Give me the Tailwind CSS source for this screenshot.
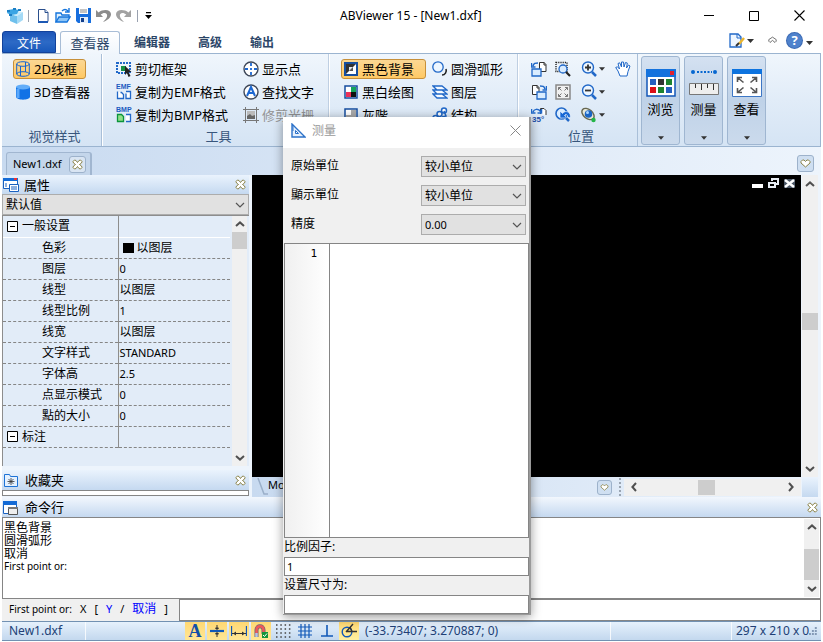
<!DOCTYPE html>
<html lang="zh-CN">

<head>
  <meta charset="UTF-8" />
  <meta name="viewport" content="width=device-width, initial-scale=1.0" />
  <title>ABViewer 15 - [New1.dxf]</title>
  <script src="https://cdn.jsdelivr.net/npm/@tailwindcss/browser@4"></script>
</head>

<body class="h-screen flex flex-col overflow-hidden bg-white px-0.5 text-[12px] leading-4 text-black font-['Noto_Sans','Noto_Sans_CJK_SC',sans-serif]">

  <!-- Shared glyphs -->
  <svg class="hidden">
    <symbol id="caret" viewBox="0 0 7 4"><path d="M0 0h7L3.500 4z" fill="#333" /></symbol>
    <symbol id="chev" viewBox="0 0 10 6"><path d="M1 1l4 4 4-4" fill="none" stroke="#555" stroke-width="1.2" /></symbol>
    <symbol id="arrow" viewBox="0 0 10 6"><path d="M1 1l4 3.600L9 1" fill="none" stroke="#505050" stroke-width="2" /></symbol>
    <symbol id="close" viewBox="0 0 11 11"><path d="M2.500 1L4 1.500l1.500 2 1.500-2L8.500 1l1.500 1.500-.5 1.500-2 1.500 2 1.500.5 1.500L8.500 10 7 9.500l-1.500-2-1.500 2-1.500.5L1 8.500 1.500 7l2-1.500-2-1.500L1 2.500z" fill="#fff" stroke="#8a8247" /></symbol>
    <symbol id="heart" viewBox="0 0 11 9"><path d="M1 2.500L2.500 1H4l1.500 1.500L7 1h1.500L10 2.500V4L5.500 8 1 4z" fill="#fff" stroke="#8a8247" /></symbol>
    <symbol id="page" viewBox="0 0 12 15"><path d="M1.500 1.500H8l3 3v9H1.500z" fill="#fff" stroke="#2a4f8c" /><path d="M1 14h10" stroke="#1c58b4" stroke-width="2" /><path d="M8 1.500v3h3" fill="#dbe8f8" stroke="#2a4f8c" /></symbol>
  </svg>

  <!-- Title bar -->
  <header class="h-[31px] shrink-0 flex items-center">
    <div class="w-[338px] flex items-center pl-1">
      <svg class="w-[18px] h-[18px]" viewBox="0 0 18 18">
        <path d="M4 7l7 2v8l-7-3z" fill="#6fc0ec" />
        <path d="M4 7l5-3 8 1-6 4z" fill="#c8ecfb" />
        <path d="M11 9l6-4v8l-6 4z" fill="#a4daf6" />
        <path d="M2 3l6-1 5 1-2 4-6 1-4-2z" fill="#3aa5e4" />
        <path d="M1 3h3v2H1zM7 1h3v2H7zM12 2h3v2h-3zM3 7h3v2H3z" fill="#1b7fc6" />
      </svg>
      <span class="w-px h-3 bg-gray-400 ml-1 mr-2"></span>
      <button aria-label="New"><svg class="w-[12px] h-[15px]"><use href="#page" /></svg></button>
      <button aria-label="Open" class="ml-1.5">
        <svg class="w-4 h-4" viewBox="0 0 16 16">
          <path d="M1 14V5h5l1 2h7v2" fill="#dff1ff" stroke="#1474dc" stroke-width="1.400" />
          <path d="M1 14l3-5h11l-3 5z" fill="#8cc4f6" stroke="#1474dc" stroke-width="1.400" />
          <path d="M7 3c2-2 4-2 6 0M14 0v4h-4" fill="none" stroke="#1474dc" stroke-width="1.400" />
        </svg>
      </button>
      <button aria-label="Save" class="ml-[5px]">
        <svg class="w-[15px] h-[15px]" viewBox="0 0 15 15">
          <path d="M0 0h15v15H2l-2-2z" fill="#176ede" />
          <path d="M3 0h9v6H3z" fill="#fff" /><path d="M4 2h7M4 4h7" stroke="#888" />
          <path d="M4 9h8v6H4z" fill="#e5eefa" /><path d="M5 10h3v4H5z" fill="#123f8c" />
        </svg>
      </button>
      <button aria-label="Undo" class="ml-[5px]">
        <svg class="w-[15px] h-[14px]" viewBox="0 0 15 14"><path d="M0 1v7h7L4.700 5.600C8 2.500 12 4 11 7.500c-.5 2-2 3.500-4 5.500 4-1.500 8-4 8-8C14.500 0 7 0 2.600 3.400z" fill="#8c8c8c" /></svg>
      </button>
      <button aria-label="Redo" class="ml-[5px]">
        <svg class="w-[15px] h-[14px]" viewBox="0 0 15 14"><path d="M15 1v7H8l2.300-2.400C7 2.500 3 4 4 7.500c.5 2 2 3.500 4 5.500C4 11.500 0 9 0 5 .5 0 8 0 12.400 3.400z" fill="#a2a2a2" /></svg>
      </button>
      <span class="w-px h-3 bg-gray-400 ml-1.5 mr-[7px]"></span>
      <button aria-label="Customize"><svg class="w-[7px] h-[7px]" viewBox="0 0 7 7"><path d="M1 0h5v1.300H1zM0 3h7L3.500 7z" /></svg></button>
    </div>
    <h1 class="flex-1">ABViewer 15 - [New1.dxf]</h1>
    <div class="flex items-center gap-[35px] pr-4">
      <button aria-label="Minimize"><svg class="w-2.5 h-2.5" viewBox="0 0 10 10"><path d="M0 4.500h10" stroke="#000" /></svg></button>
      <button aria-label="Maximize"><svg class="w-2.5 h-2.5" viewBox="0 0 10 10"><path d="M.5.5h9v9h-9z" fill="none" stroke="#000" /></svg></button>
      <button aria-label="Close"><svg class="w-[11px] h-[11px]" viewBox="0 0 11 11"><path d="M.5.5l10 10M10.500.5l-10 10" stroke="#000" stroke-width="1.100" /></svg></button>
    </div>
  </header>

  <!-- Ribbon tabs -->
  <nav class="h-[23px] shrink-0 flex items-end border-b border-[#9bb4d0] text-[#2b4567]">
    <button class="w-[54px] h-[22px] rounded-t-[3px] border border-[#12429b] bg-linear-to-b from-[#1d55b8] via-[#2d6ac6] to-[#1858bb] text-white pt-[3px]">文件</button>
    <button class="relative top-px ml-1 w-[60px] h-[23px] rounded-t-[3px] border border-b-0 border-[#a8bdd6] bg-linear-to-b from-white to-[#f0f6fc] text-[13px]">查看器</button>
    <button class="ml-3.5 h-[22px] pt-0.5 font-bold">编辑器</button>
    <button class="ml-[28px] h-[22px] pt-0.5 font-bold">高级</button>
    <button class="ml-[28px] h-[22px] pt-0.5 font-bold">输出</button>
    <div class="ml-auto h-full flex items-start pt-0.5 pr-2">
      <button aria-label="Style" class="flex items-center gap-0.5">
        <svg class="w-4 h-4" viewBox="0 0 16 16">
          <path d="M1 1h8l3 3v10H1z" fill="#eef6ff" stroke="#2168c8" stroke-width="1.300" /><path d="M8 1v4h4" fill="none" stroke="#2168c8" />
          <path d="M15 5l-5 6" stroke="#ecb62e" stroke-width="2.500" /><path d="M10 10l-3 3" stroke="#333" stroke-width="2" />
        </svg>
        <svg class="w-[7px] h-1"><use href="#caret" /></svg>
      </button>
      <button aria-label="Collapse" class="ml-3.5 mt-[3px]"><svg class="w-[9px] h-[8px] rotate-180" viewBox="0 0 11 9"><path d="M1 3l1.500-1.500L5.500 4l3-2.500L10 3v2L5.500 8 1 5z" fill="#fff" stroke="#555" /></svg></button>
      <button aria-label="Help" class="ml-2.5 flex items-center gap-1">
        <span class="w-[15px] h-[15px] rounded-full bg-[#4f82cc] ring-1 ring-[#3b6ab4] text-white font-bold text-[13px] leading-[15px]">?</span>
        <svg class="w-[7px] h-1 mt-1"><use href="#caret" /></svg>
      </button>
    </div>
  </nav>

  <!-- Ribbon -->
  <section class="h-[93px] shrink-0 flex border-b border-[#9bb4d0] bg-linear-to-b from-[#f0f6fc] via-[#e1ecf8] to-[#d5e4f4] text-[13px]">
    <div class="w-[100px] flex flex-col border-r border-[#a9bfd8] pt-[5px]">
      <div class="h-[69px] px-[11px]">
        <button class="w-[73px] h-5 flex items-center gap-1 px-0.5 rounded-[3px] border border-[#c7903a] bg-linear-to-b from-[#fbd793] to-[#ffc964] whitespace-nowrap">
          <svg class="w-[14px] h-4 shrink-0" viewBox="0 0 14 16"><path d="M.7 3v10M13.300 3v10M4.500 5v10M9.500 1v10" fill="none" stroke="#1766d2" /><ellipse cx="7" cy="3" rx="6.300" ry="2.300" fill="none" stroke="#1766d2" /><ellipse cx="7" cy="13" rx="6.300" ry="2.300" fill="none" stroke="#1766d2" /></svg>2D线框</button>
        <button class="h-[25px] flex items-center gap-1 px-[3px] whitespace-nowrap">
          <svg class="w-[14px] h-4 shrink-0" viewBox="0 0 14 16"><path d="M0 3v10c1 3.500 13 3.500 14 0V3z" fill="#1272e6" /><path d="M2 5v9" stroke="#5aa8fb" stroke-width="3" /><ellipse cx="7" cy="3" rx="7" ry="2.500" fill="#62adf9" /></svg>3D查看器</button>
      </div>
      <h2 class="text-center text-[#38567c] pl-1.5">视觉样式</h2>
    </div>

    <div class="w-[227px] flex flex-col border-r border-[#bfcfe2] border-l border-l-white pt-[5px]">
      <div class="h-[69px] grid grid-cols-[127px_1fr] grid-rows-[20px_25px_22px] pl-[13px] whitespace-nowrap">
        <button class="flex items-center gap-[3px]">
          <svg class="w-4 h-4" viewBox="0 0 16 16"><path d="M1 2h13v10H1z" fill="none" stroke="#2168c8" stroke-width="2" stroke-dasharray="2 1" /><path d="M5 5h5v5H5z" fill="#159045" /><path d="M9 5v9l2-2 1.500 4 2-1-2-4h3z" fill="#222" /></svg>剪切框架</button>
        <button class="flex items-center gap-[3px]">
          <svg class="w-4 h-4" viewBox="0 0 16 16"><circle cx="8" cy="8" r="7" fill="#fff" stroke="#3e4758" stroke-width="1.400" /><path d="M8 2v3M8 11v3M2 8h3M11 8h3M8 7v2" stroke="#1d68d2" stroke-width="1.800" /></svg>显示点</button>
        <button class="flex items-center gap-[3px]">
          <svg class="w-4 h-4" viewBox="0 0 16 16"><text x="0" y="5" font-size="7" font-weight="bold" fill="#1c5bc0" font-family="Liberation Sans">EMF</text><path d="M1.500 7.500v7h6v-4l-2-2h-1M10 7.500h4.500v7H10v-5" fill="#fff" stroke="#2168c8" stroke-width="1.300" /></svg>复制为EMF格式</button>
        <button class="flex items-center gap-[3px]">
          <svg class="w-4 h-4" viewBox="0 0 16 16"><circle cx="8" cy="8" r="7" fill="#fff" stroke="#3e4758" stroke-width="1.400" /><path d="M4 12l4-9 4 9M6 9h4" fill="none" stroke="#1d68d2" stroke-width="2" /></svg>查找文字</button>
        <button class="flex items-center gap-[3px]">
          <svg class="w-4 h-4" viewBox="0 0 16 16"><text x="0" y="5" font-size="7" font-weight="bold" fill="#1c5bc0" font-family="Liberation Sans">BMP</text><path d="M1.500 7.500h4l2 2v5h-6z" fill="#92df89" stroke="#0b943b" stroke-width="1.300" /><path d="M10 7.500h4.500v7H10" fill="#fff" stroke="#2168c8" stroke-width="1.300" /></svg>复制为BMP格式</button>
        <button class="flex items-center gap-[3px] text-[#929292]" disabled>
          <svg class="w-4 h-4" viewBox="0 0 16 16"><path d="M2.500 0v16M13.500 0v16M0 2.500h16M0 13.500h16" stroke="#777" /><path d="M4 4h8v8H4z" fill="#bbb" /><path d="M4 12v-3l3-2 2 2 3-1v4z" fill="#666" /></svg>修剪光栅</button>
      </div>
      <h2 class="text-center text-[#38567c] pl-1.5">工具</h2>
    </div>

    <div class="w-[189px] border-r border-[#bfcfe2] border-l border-l-white pt-[5px]">
      <div class="h-[69px] grid grid-cols-[91px_1fr] grid-rows-[20px_25px_22px] pl-[11px] whitespace-nowrap">
        <button class="w-[85px] flex items-center gap-1 px-0.5 rounded-[3px] border border-[#c7903a] bg-linear-to-b from-[#fbd793] to-[#ffc964]">
          <svg class="w-[14px] h-[14px] shrink-0" viewBox="0 0 14 14"><path d="M1 1h12v12H1z" fill="#fff" stroke="#164e9e" stroke-width="2" /><path d="M2 2h10L2 12z" fill="#333" /><path d="M5 5h4v4H5z" fill="#dfe5ec" /><path d="M9 5v4H5z" fill="#555" /></svg>黑色背景</button>
        <button class="flex items-center gap-[3px]">
          <svg class="w-4 h-4" viewBox="0 0 16 16"><path d="M14 8c1 3-1 6-4 6" fill="none" stroke="#222" stroke-width="1.600" /><circle cx="6" cy="6" r="5.200" fill="#edf6ff" stroke="#2168c8" stroke-width="1.300" /></svg>圆滑弧形</button>
        <button class="flex items-center gap-1 px-[3px]">
          <svg class="w-[14px] h-[14px] shrink-0" viewBox="0 0 14 14"><path d="M1 1h12v12H1z" fill="#fff" stroke="#164e9e" stroke-width="1.500" /><path d="M7 2h5v5H7z" fill="#16a45a" /><path d="M2 7h5v5H2z" fill="#ec3158" /><path d="M7 7h5v5H7z" fill="#111" /></svg>黑白绘图</button>
        <button class="flex items-center gap-[3px]">
          <svg class="w-4 h-4" viewBox="0 0 16 16"><path d="M1 10h9l5 4H5zM1 6h9l5 4H5zM1 2h9l5 4H5z" fill="#f5faff" stroke="#2168c8" stroke-width="1.300" /></svg>图层</button>
        <button class="flex items-center gap-1 px-[3px]">
          <svg class="w-[14px] h-[14px] shrink-0" viewBox="0 0 14 14"><path d="M1 1h12v12H1z" fill="#fff" stroke="#164e9e" stroke-width="1.500" /><path d="M7 2h5v10H2V7h5z" fill="#aaa" /></svg>灰階</button>
        <button class="flex items-center gap-[3px]">
          <svg class="w-4 h-4" viewBox="0 0 16 16"><circle cx="12" cy="3.500" r="2.500" fill="#fff" stroke="#2168c8" stroke-width="1.500" /><circle cx="7.500" cy="7" r="2.500" fill="#fff" stroke="#2168c8" stroke-width="1.500" /><circle cx="3.500" cy="11" r="2.500" fill="#fff" stroke="#2168c8" stroke-width="1.500" /><path d="M12 4l2 5-4 1" fill="none" stroke="#2168c8" stroke-width="1.500" /></svg>结构</button>
      </div>
    </div>

    <div class="w-[120px] border-r border-[#a9bfd8] border-l border-l-white pt-[5px]">
      <div class="h-[69px] grid grid-cols-[24px_26px_34px_1fr] grid-rows-[20px_25px_22px] pl-3 items-center">
        <button aria-label="Rotate left"><svg class="w-4 h-4" viewBox="0 0 16 16"><path d="M8.500 1.500H13l2 2v7H8.500z" fill="#fff" stroke="#333" /><path d="M13 1v3h2" fill="none" stroke="#333" /><path d="M1 8h9v7H1z" fill="#d9ecff" stroke="#2168c8" stroke-width="1.300" /><path d="M2 5c1-3 2-3 5-3M.5 2v4h4" fill="none" stroke="#2168c8" stroke-width="1.500" /></svg></button>
        <button aria-label="Zoom window"><svg class="w-4 h-4" viewBox="0 0 16 16"><path d="M1 1.500h11v9H1z" fill="none" stroke="#222" stroke-width="1.400" stroke-dasharray="1.200 1" /><circle cx="8" cy="8" r="4" fill="#d9ecff" stroke="#2168c8" stroke-width="1.300" /><path d="M11 11l4 4" stroke="#222" stroke-width="2.200" /></svg></button>
        <button aria-label="Zoom in" class="flex items-center gap-0.5"><svg class="w-4 h-4" viewBox="0 0 16 16"><circle cx="7" cy="6.500" r="5.500" fill="#edf6ff" stroke="#2168c8" stroke-width="1.400" /><path d="M4 6.500h6M7 3.500v6" stroke="#333" stroke-width="1.800" /><path d="M11 11l4 4" stroke="#2168c8" stroke-width="2.500" /></svg><svg class="w-[6px] h-1"><use href="#caret" /></svg></button>
        <button aria-label="Pan"><svg class="w-4 h-4" viewBox="0 0 16 16"><path d="M5 15L3 10 .7 6.500 2.500 5.800 4.500 8 3 2.500l1.700-.7L6.500 6V1h2L9 6l1.500-4.500 1.800.5L11.500 7 13.500 4l1.500 1-2 5.500L12 15z" fill="#fff" stroke="#2168c8" /></svg></button>

        <button aria-label="Rotate right"><svg class="w-4 h-4" viewBox="0 0 16 16"><path d="M1.500 1.500H6l2 2v7H1.500z" fill="#fff" stroke="#333" /><path d="M6 1v3h2" fill="none" stroke="#333" /><path d="M6 8h9v7H6z" fill="#d9ecff" stroke="#2168c8" stroke-width="1.300" /><path d="M9 2c3 0 4 0 5 3M15.500 2v4h-4" fill="none" stroke="#2168c8" stroke-width="1.500" /></svg></button>
        <button aria-label="Fit to screen"><svg class="w-4 h-4" viewBox="0 0 16 16"><path d="M1 1h14v14H1z" fill="#f0f0f0" stroke="#888" stroke-width="1.500" /><path d="M3.500 6V3.500H6M3.500 3.500l3 3M10 3.500h2.500V6M12.500 3.500l-3 3M3.500 10v2.500H6M3.500 12.500l3-3M12.500 10v2.500H10M12.500 12.500l-3-3" fill="none" stroke="#777" /></svg></button>
        <button aria-label="Zoom out" class="flex items-center gap-0.5"><svg class="w-4 h-4" viewBox="0 0 16 16"><circle cx="7" cy="6.500" r="5.500" fill="#edf6ff" stroke="#2168c8" stroke-width="1.400" /><path d="M4 6.500h6" stroke="#333" stroke-width="1.800" /><path d="M11 11l4 4" stroke="#2168c8" stroke-width="2.500" /></svg><svg class="w-[6px] h-1"><use href="#caret" /></svg></button>
        <span></span>

        <button aria-label="Rotate 35°"><svg class="w-4 h-4" viewBox="0 0 16 16"><path d="M9.500 7V1.500H13l2 2V8" fill="#fff" stroke="#333" /><path d="M2 5c1-3 5-4 8 0M.5 2v4h4M10.500 2v4h-4" fill="none" stroke="#2168c8" stroke-width="1.500" /><text x="1" y="15" font-size="8" font-weight="bold" fill="#1c4fa8" font-family="Liberation Sans">35°</text></svg></button>
        <button aria-label="Previous view"><svg class="w-4 h-4" viewBox="0 0 16 16"><circle cx="6.500" cy="6.500" r="5.500" fill="#d9ecff" stroke="#2168c8" stroke-width="1.600" /><path d="M5 4v7h7L9.500 8.500c1.500-2 3-1 3 1.500l2.500 1c2-5-4-9-7.500-4.500z" fill="#1767d5" stroke="#fff" stroke-width=".6" /><path d="M11 11l3 3" stroke="#2168c8" stroke-width="2.500" /></svg></button>
        <button aria-label="Orbit" class="flex items-center gap-0.5"><svg class="w-4 h-4" viewBox="0 0 16 16"><ellipse cx="7" cy="7" rx="7" ry="4.500" transform="rotate(40 7 7)" fill="#e8e8d8" stroke="#666650" stroke-width="1.400" /><circle cx="7.500" cy="7" r="3.800" fill="#1a64c4" /><circle cx="6.500" cy="5.500" r="1.500" fill="#a8d3ff" /><circle cx="12.500" cy="13" r="2.200" fill="#23b547" /></svg><svg class="w-[6px] h-1"><use href="#caret" /></svg></button>
      </div>
      <h2 class="text-center text-[#38567c] pl-1.5">位置</h2>
    </div>

    <div class="flex-1 flex gap-1 pl-[3px] pt-0.5 pb-px border-r border-[#9bb4d0]">
      <button class="w-[39px] flex flex-col items-center rounded-[3px] border border-[#9fb6d1] bg-linear-to-b from-[#d4e1f1] via-[#bfd2e8] to-[#cbdaec] pt-3">
        <svg class="w-[30px] h-7 shrink-0" viewBox="0 0 30 28"><path d="M1 1h28v26H1z" fill="#fff" stroke="#1357b8" stroke-width="1.500" /><path d="M0 0h30v8H0z" fill="#1472dd" /><path d="M24 2h4v4h-4z" fill="#e1202f" /><path d="M4 10h6v6H4zM20 18h6v6h-6z" fill="#2560c0" /><path d="M12 10h6v6h-6z" fill="#333" /><path d="M20 10h6v6h-6zM12 18h6v6h-6z" fill="#1d8430" /><path d="M4 18h6v6H4z" fill="#dc1018" /></svg>
        <span class="mt-1">浏览</span>
        <svg class="w-[6px] h-1 mt-auto mb-1"><use href="#caret" /></svg>
      </button>
      <button class="w-[39px] flex flex-col items-center rounded-[3px] border border-[#9fb6d1] bg-linear-to-b from-[#d4e1f1] via-[#bfd2e8] to-[#cbdaec] pt-3">
        <svg class="w-[30px] h-7 shrink-0" viewBox="0 0 30 28"><circle cx="4" cy="3" r="2" fill="#0767d0" /><circle cx="26" cy="3" r="2" fill="#0767d0" /><path d="M8 3h15" stroke="#0767d0" stroke-width="2" stroke-dasharray="2 1.500" /><path d="M.5 14.500h29v11H.5z" fill="#eee" stroke="#777" /><path d="M6.500 15v4M12.500 15v6M18.500 15v4M24.500 15v6" stroke="#333" /></svg>
        <span class="mt-1">测量</span>
        <svg class="w-[6px] h-1 mt-auto mb-1"><use href="#caret" /></svg>
      </button>
      <button class="w-[39px] flex flex-col items-center rounded-[3px] border border-[#9fb6d1] bg-linear-to-b from-[#d4e1f1] via-[#bfd2e8] to-[#cbdaec] pt-3">
        <svg class="w-[30px] h-7 shrink-0" viewBox="0 0 30 28"><path d="M.5.5h29v27H.5z" fill="#fff" stroke="#3c76c5" /><path d="M0 0h30v5H0z" fill="#0d73df" /><path d="M5.500 13V8.500H10M5.500 8.500l6 5M20 8.500h4.500V13M24.500 8.500l-6 5M5.500 19v4.500H10M5.500 23.500l6-5M24.500 19v4.500H20M24.500 23.500l-6-5" fill="none" stroke="#555" stroke-width="1.600" /></svg>
        <span class="mt-1">查看</span>
        <svg class="w-[6px] h-1 mt-auto mb-1"><use href="#caret" /></svg>
      </button>
    </div>
  </section>

  <!-- Document tabs -->
  <div class="h-[28px] shrink-0 flex items-end justify-between bg-linear-to-r from-[#c8daf0] to-[#edf4fc] pl-1 pr-[7px]">
    <div class="h-[23px] w-[86px] flex items-center justify-between pl-1.5 pr-1 rounded-t-[3px] border-l border-r-2 border-t border-[#a1b6d0] bg-[#c4d6eb] text-[11px]">
      <span>New1.dxf</span>
      <button aria-label="Close New1.dxf" class="w-[17px] h-[17px] flex items-center justify-center rounded-[3px] border border-[#9db2cb] bg-[#d9e5f3]"><svg class="w-[11px] h-[11px]"><use href="#close" /></svg></button>
    </div>
    <button aria-label="Tab list" class="w-[17px] h-[17px] mb-[3px] flex items-center justify-center rounded-[3px] border border-[#9db2cb] bg-[#cfdff1]"><svg class="w-[11px] h-[9px]"><use href="#heart" /></svg></button>
  </div>

  <!-- Workspace -->
  <main class="flex-1 min-h-0 flex bg-[#edf4fc]">
    <aside class="w-[247px] shrink-0 flex flex-col">
      <div class="h-[19px] flex items-center bg-linear-to-b from-[#eaf3fd] to-[#c5d9f0] pl-px pr-[3px] text-[13px]">
        <svg class="w-4 h-4" viewBox="0 0 16 16"><path d="M.5 1.500h14v10H.5z" fill="#fff" stroke="#1a61bf" /><path d="M0 1h15v3H0z" fill="#146bd6" /><path d="M11 1h3v2h-3z" fill="#e33" /><path d="M6.500 7.500h9v7h-9z" fill="#fff" stroke="#1a61bf" /><path d="M8 10h6M8 12h6M2 7h2M2 9h2" stroke="#1a61bf" /></svg>
        <h2 class="pl-[5px]">属性</h2>
        <button aria-label="Close panel" class="ml-auto"><svg class="w-[11px] h-[11px]"><use href="#close" /></svg></button>
      </div>
      <div class="grid items-center">
        <select aria-label="默认值" class="col-start-1 row-start-1 h-[21px] w-full appearance-none border border-[#acacac] bg-[#e1e1e1] pl-[3px]">
          <option>默认值</option>
        </select>
        <svg class="col-start-1 row-start-1 justify-self-end mr-1 w-2.5 h-1.5 pointer-events-none"><use href="#chev" /></svg>
      </div>
      <div class="flex-1 min-h-0 flex bg-[#e2ecf8] border-l border-t border-[#8d8d8d]">
        <div class="flex-1">
          <table class="w-[227px] border-collapse table-fixed">
            <colgroup><col class="w-[115px]" /><col /></colgroup>
            <tbody class="[&_th]:font-normal [&_th]:text-left [&_th]:h-[21px] [&_td]:p-0 [&_th]:py-0 [&_th]:border-r [&_th]:border-r-[#8d8d8d] [&_td]:pl-px [&_tr]:border-b [&_tr]:border-dashed [&_tr]:border-[#858585]">
              <tr class="border-solid! border-white!">
                <th><span class="flex items-center gap-1 pl-1"><svg class="w-[11px] h-[11px]" viewBox="0 0 11 11"><path d="M.5.5h10v10H.5zM3 5.500h5" fill="#fff" stroke="#000" /></svg>一般设置</span></th>
                <td></td>
              </tr>
              <tr><th class="pl-[39px]">色彩</th><td><span class="flex items-center gap-[3px] pl-[3px]"><i class="w-[11px] h-2.5 bg-black"></i>以图层</span></td></tr>
              <tr><th class="pl-[39px]">图层</th><td class="text-[11px]">0</td></tr>
              <tr><th class="pl-[39px]">线型</th><td>以图层</td></tr>
              <tr><th class="pl-[39px]">线型比例</th><td class="text-[11px]">1</td></tr>
              <tr><th class="pl-[39px]">线宽</th><td>以图层</td></tr>
              <tr><th class="pl-[39px]">文字样式</th><td class="text-[11px]">STANDARD</td></tr>
              <tr><th class="pl-[39px]">字体高</th><td class="text-[11px]">2.5</td></tr>
              <tr><th class="pl-[39px]">点显示模式</th><td class="text-[11px]">0</td></tr>
              <tr><th class="pl-[39px]">點的大小</th><td class="text-[11px]">0</td></tr>
              <tr>
                <th><span class="flex items-center gap-1 pl-1"><svg class="w-[11px] h-[11px]" viewBox="0 0 11 11"><path d="M.5.5h10v10H.5zM3 5.500h5" fill="#fff" stroke="#000" /></svg>标注</span></th>
                <td></td>
              </tr>
            </tbody>
          </table>
        </div>
        <div class="w-[15px] mr-0.5 flex flex-col items-center bg-[#f0f0f0] py-[5px]">
          <svg class="w-2.5 h-1.5 rotate-180"><use href="#arrow" /></svg>
          <div class="w-full h-[17px] mt-[5px] bg-[#cdcdcd]"></div>
          <svg class="w-2.5 h-1.5 mt-auto"><use href="#arrow" /></svg>
        </div>
      </div>
      <div class="h-5 mt-1 flex items-center bg-linear-to-b from-[#eaf3fd] to-[#c5d9f0] pl-0.5 pr-[3px] text-[13px]">
        <svg class="w-[14px] h-[13px]" viewBox="0 0 14 13"><path d="M.5 12.500V.5h5l1 2h7v10z" fill="#e4f1ff" stroke="#1d72d6" /><path d="M7 4v7M3.500 7.500h7M4.500 5l5 5M9.500 5l-5 5" stroke="#333" stroke-width=".8" /></svg>
        <h2 class="pl-[7px]">收藏夹</h2>
        <button aria-label="Close panel" class="ml-auto"><svg class="w-[11px] h-[11px]"><use href="#close" /></svg></button>
      </div>
      <div class="h-1.5 mb-px border border-[#858585] bg-white"></div>
    </aside>

    <div class="flex-1 min-w-0 ml-[3px] flex flex-col">
      <div class="flex-1 min-h-0 flex">
        <div class="flex-1 bg-black flex justify-end items-start gap-[5px] pt-0.5 pr-1.5">
          <button aria-label="Minimize drawing"><svg class="w-[11px] h-3" viewBox="0 0 11 12"><path d="M0 7h11v4H0z" fill="#fff" /></svg></button>
          <button aria-label="Restore drawing"><svg class="w-[11px] h-3" viewBox="0 0 11 12"><path d="M4 4V2h6v5H8M1 6h6v4H1z" fill="none" stroke="#e8edf4" stroke-width="2" /></svg></button>
          <button aria-label="Close drawing"><svg class="w-[11px] h-3" viewBox="0 0 11 12"><path d="M0 2h11v9H0z" fill="#4b5766" /><path d="M1 3l9 7M10 3l-9 7" stroke="#fff" stroke-width="2.500" /></svg></button>
        </div>
        <div class="w-4 mr-[3px] ml-px flex flex-col items-center bg-[#f0f0f0] pt-1.5 pb-[5px]">
          <svg class="w-2.5 h-1.5 rotate-180"><use href="#arrow" /></svg>
          <div class="w-full h-[17px] mt-[126px] bg-[#cdcdcd]"></div>
          <svg class="w-2.5 h-1.5 mt-auto"><use href="#arrow" /></svg>
        </div>
      </div>
      <div class="h-5 flex items-center bg-linear-to-r from-[#c8daf0] to-[#edf4fc]">
        <button class="flex items-center text-[11px] h-full pl-1 leading-[14px]">
          <svg class="w-3 h-[18px]" viewBox="0 0 12 18"><path d="M2 0l6 16h4" fill="none" stroke="#9aafc9" stroke-width="1.500" /></svg>
          <span class="pb-1">Model</span></button>
        <button aria-label="Layout list" class="ml-auto w-[15px] h-[15px] flex items-center justify-center rounded-[3px] border border-[#9db2cb] bg-[#cfdff1]"><svg class="w-[9px] h-[7px]"><use href="#heart" /></svg></button>
        <div class="ml-[7px] mr-[3px] h-[18px] border-l-2 border-dotted border-[#9aa5b2]"></div>
        <div class="w-[177px] h-[17px] flex items-center justify-between bg-[#f0f0f0] px-[5px]">
          <svg class="w-2.5 h-1.5 rotate-90"><use href="#arrow" /></svg>
          <div class="w-[17px] h-[15px] mr-3 bg-[#cdcdcd]"></div>
          <svg class="w-2.5 h-1.5 -rotate-90"><use href="#arrow" /></svg>
        </div>
        <div class="w-4 h-full bg-linear-to-b from-[#eaf3fd] to-[#c5d9f0] ml-px mr-[3px]"></div>
      </div>
    </div>
  </main>

  <!-- Command line -->
  <section class="shrink-0">
    <div class="h-5 flex items-center bg-linear-to-b from-[#f2f7fd] to-[#c5d9f0] pl-px pr-[3px] text-[13px]">
      <svg class="w-[15px] h-[15px]" viewBox="0 0 15 15"><path d="M.5 1.500h13v12H.5z" fill="#fff" stroke="#1a61bf" /><path d="M0 1h14v4H0z" fill="#146bd6" /><path d="M5.500 7.500h9v7h-9z" fill="#eee" stroke="#555" /><path d="M5 7h10v2H5z" fill="#777" /></svg>
      <h2 class="pl-[7px]">命令行</h2>
      <button aria-label="Close panel" class="ml-auto"><svg class="w-[11px] h-[11px]"><use href="#close" /></svg></button>
    </div>
    <div class="h-[82px] flex justify-between border border-[#858585] bg-white pl-px pr-px py-px">
      <div class="leading-[13px] pt-0.5">
        <p>黑色背景</p>
        <p>圆滑弧形</p>
        <p>取消</p>
        <p class="text-[10px]">First point or:</p>
      </div>
      <div class="w-[15px] flex flex-col items-center bg-[#f0f0f0] py-[5px]">
        <svg class="w-2.5 h-1.5 rotate-180"><use href="#arrow" /></svg>
        <div class="w-full h-[31px] mt-[19px] bg-[#cdcdcd]"></div>
        <svg class="w-2.5 h-1.5 mt-auto"><use href="#arrow" /></svg>
      </div>
    </div>
    <div class="h-[22px] flex">
      <label for="cmd" class="w-[177px] flex items-center gap-2 pl-[7px] pb-0.5 bg-[#f0f0f0] text-[10px] whitespace-nowrap">
        First point or: <span class="text-[11px]">X</span><span class="text-[11px]">[</span><a href="#" class="text-[11px] text-[#0000ff]">Y</a><span class="text-[11px]">/</span><a href="#" class="text-[#0000ff] text-[12px]">取消</a><span class="text-[11px]">]</span>
      </label>
      <input id="cmd" type="text" class="flex-1 border border-[#858585] bg-white px-1 outline-none" />
    </div>
  </section>

  <!-- Status bar -->
  <footer class="h-5 mb-px shrink-0 flex items-center border-y border-[#7291b2] bg-linear-to-b from-[#e6f1fc] to-[#c3d8ee] text-[#213f76]">
    <span class="w-[83px] pl-[7px]">New1.dxf</span>
    <span class="w-[100px] h-full border-l border-white/80"></span>
    <div class="h-full flex gap-0.5">
      <button aria-label="Text" class="w-5 flex items-center justify-center bg-linear-to-b from-[#ffd873] to-[#ffe795] font-['Liberation_Serif',serif] font-bold text-[18px] leading-4 text-[#1250a8]">A</button>
      <button aria-label="Align" class="w-5 flex items-center justify-center bg-linear-to-b from-[#ffd873] to-[#ffe795]"><svg class="w-3.5 h-3.5" viewBox="0 0 14 14"><path d="M0 7h14" stroke="#1259b8" stroke-width="2.200" /><path d="M7 1v3M7 10v3M5.500 4h3L7 5.500zM5.500 10h3L7 8.500z" fill="#333" stroke="#333" /></svg></button>
      <button aria-label="Dimension" class="w-5 flex items-center justify-center bg-linear-to-b from-[#ffd873] to-[#ffe795]"><svg class="w-4 h-3.5" viewBox="0 0 16 14"><path d="M.5 2v10M15.500 2v10" stroke="#1259b8" stroke-width="1.300" /><path d="M1 9.500h14" stroke="#333" /><path d="M2 9.500l3-2v4zM14 9.500l-3-2v4z" fill="#333" /></svg></button>
      <button aria-label="Snap" class="w-5 flex items-center justify-center bg-linear-to-b from-[#ffd873] to-[#ffe795]"><svg class="w-3.5 h-3.5" viewBox="0 0 14 14"><path d="M2.500 13V6c0-5 7-5 7 0v4" fill="none" stroke="#667" stroke-width="4" /><path d="M2.500 12V6c0-5 7-5 7 0v3" fill="none" stroke="#ee5a5a" stroke-width="2.500" /><path d="M1.300 9h2.400v4H1.300z" fill="#a9c6ee" /><path d="M8 8h6v6H8z" fill="#14963a" /><path d="M9 11l1.500 1.500L13 9.500" fill="none" stroke="#fff" /></svg></button>
      <button aria-label="Grid snap" class="w-5 flex items-center justify-center"><svg class="w-[15px] h-3.5" viewBox="0 0 15 14"><path d="M0 1h15M0 5h15M0 9h15M0 13h15" stroke="#444" stroke-width="1.500" stroke-dasharray="1.500 2.800" /></svg></button>
      <button aria-label="Grid" class="w-5 flex items-center justify-center"><svg class="w-3.5 h-3.5" viewBox="0 0 14 14"><path d="M3 0v14M7 0v14M11 0v14M0 3h14M0 7h14M0 11h14" stroke="#1259b8" stroke-width="1.200" /></svg></button>
      <button aria-label="Ortho" class="w-5 flex items-center justify-center"><svg class="w-3.5 h-3.5" viewBox="0 0 14 14"><path d="M7 1v11M1 12h12" stroke="#1259b8" stroke-width="1.600" /></svg></button>
      <button aria-label="Polar" class="w-5 flex items-center justify-center bg-linear-to-b from-[#ffd873] to-[#fff0a0]"><svg class="w-4 h-4" viewBox="0 0 16 16"><circle cx="6" cy="9" r="4.800" fill="none" stroke="#1259b8" stroke-width="1.400" /><path d="M5 9l7-8M5 8.500h11M9 4l2 4.500" fill="none" stroke="#333" stroke-width="1.400" /></svg></button>
    </div>
    <span class="pl-1.5">(-33.73407; 3.270887; 0)</span>
    <span class="ml-auto w-[121px] h-full border-l border-white/80"></span>
    <span class="w-[90px] h-full flex items-center justify-between border-l border-white/80 pl-1 pr-1 whitespace-nowrap">297 x 210 x 0
      <svg class="w-2 h-2" viewBox="0 0 8 8"><path d="M6 0h2v2H6zM3 3h2v2H3zM6 3h2v2H6zM0 6h2v2H0zM3 6h2v2H3zM6 6h2v2H6z" fill="#8399b5" /></svg></span>
  </footer>

  <!-- Measure dialog -->
  <div role="dialog" aria-labelledby="dlgTitle" class="absolute left-[283px] top-[117px] w-[248px] border-r-2 border-b border-[#9a9a9a] bg-[#f0f0f0] shadow-[0_2px_10px_rgba(0,0,0,0.4)]">
    <div class="h-[31px] flex items-center bg-white px-2 pb-1">
      <svg class="w-[15px] h-[15px]" viewBox="0 0 15 15"><path d="M1 1v13h13z" fill="#e7f1fd" stroke="#2d72c9" stroke-width="1.400" /><path d="M4.500 7.500v3h3z" fill="#fff" stroke="#2d72c9" /><path d="M1 3h2M1 5h2M1 7h2" stroke="#2d72c9" /></svg>
      <h2 id="dlgTitle" class="pl-1.5 text-[#999]">测量</h2>
      <button aria-label="Close dialog" class="ml-auto"><svg class="w-[11px] h-[11px]" viewBox="0 0 11 11"><path d="M.5.5l10 10M10.500.5l-10 10" stroke="#888" /></svg></button>
    </div>
    <div class="h-[95px] grid grid-cols-[130px_105px] gap-y-2 auto-rows-[21px] items-center pt-2 pl-2">
      <label for="srcUnit" class="pb-0.5">原始單位</label>
      <div class="grid items-center">
        <select id="srcUnit" class="col-start-1 row-start-1 h-[21px] appearance-none border border-[#acacac] bg-[#e1e1e1] pl-[3px]"><option>较小单位</option></select>
        <svg class="col-start-1 row-start-1 justify-self-end mr-1 w-2.5 h-1.5 pointer-events-none"><use href="#chev" /></svg>
      </div>
      <label for="dispUnit" class="pb-0.5">顯示單位</label>
      <div class="grid items-center">
        <select id="dispUnit" class="col-start-1 row-start-1 h-[21px] appearance-none border border-[#acacac] bg-[#e1e1e1] pl-[3px]"><option>较小单位</option></select>
        <svg class="col-start-1 row-start-1 justify-self-end mr-1 w-2.5 h-1.5 pointer-events-none"><use href="#chev" /></svg>
      </div>
      <label for="precision" class="pb-0.5">精度</label>
      <div class="grid items-center">
        <select id="precision" class="col-start-1 row-start-1 h-[21px] appearance-none border border-[#acacac] bg-[#e1e1e1] pl-[3px] text-[11px]"><option>0.00</option></select>
        <svg class="col-start-1 row-start-1 justify-self-end mr-1 w-2.5 h-1.5 pointer-events-none"><use href="#chev" /></svg>
      </div>
    </div>
    <div class="h-[295px] ml-px flex border border-[#858585] bg-white">
      <div class="w-[45px] border-r border-[#858585] bg-linear-to-r from-[#f0f0f0] to-white pt-0.5 pr-3 text-right font-['DejaVu_Sans_Mono',monospace] text-[11px]">1</div>
      <textarea aria-label="测量" class="flex-1 min-w-0 resize-none outline-none"></textarea>
    </div>
    <label for="scale" class="block h-[19px] pl-px pt-px">比例因子:</label>
    <input id="scale" type="text" value="1" class="block w-[245px] h-[19px] ml-px border border-[#858585] bg-white px-0.5 text-[11px]" />
    <label for="size" class="block h-[19px] pl-px pt-px">设置尺寸为:</label>
    <input id="size" type="text" class="block w-[245px] h-[19px] ml-px border border-[#858585] bg-white px-0.5 text-[11px]" />
  </div>

</body>

</html>
